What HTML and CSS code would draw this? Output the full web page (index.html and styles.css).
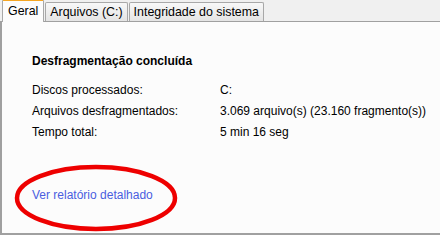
FILE: index.html
```html
<!DOCTYPE html>
<html>
<head>
<meta charset="utf-8">
<link rel="stylesheet" href="styles.css">
</head>
<body>
<div class="window">
  <div class="tabs">
    <div class="tab active">Geral</div>
    <div class="tab">Arquivos (C:)</div>
    <div class="tab">Integridade do sistema</div>
  </div>
  <div class="panel">
    <div class="title">Desfragmentação concluída</div>
    <div class="rows">
      <div class="label">Discos processados:</div><div class="value">C:</div>
      <div class="label">Arquivos desfragmentados:</div><div class="value">3.069 arquivo(s) (23.160 fragmento(s))</div>
      <div class="label">Tempo total:</div><div class="value">5 min 16 seg</div>
    </div>
    <div class="linkwrap">
      <a class="link">Ver relatório detalhado</a>
      <svg class="circle" width="166" height="70" viewBox="0 0 166 70">
        <ellipse cx="83" cy="35" rx="79" ry="31" fill="none" stroke="#ee0000" stroke-width="4.5"/>
      </svg>
    </div>
  </div>
</div>
</body>
</html>
```
FILE: styles.css
```css
html, body { margin: 0; padding: 0; }
body {
  width: 440px; height: 237px; overflow: hidden;
  background: #ffffff;
  font-family: "Liberation Sans", Arial, sans-serif;
  font-size: 12px;
  color: #000;
}
.window { width: 440px; height: 235px; display: flex; flex-direction: column; }
.tabs {
  height: 22px;
  background: #f0f0f0;
  display: flex;
  align-items: flex-end;
  padding-left: 2px;
  gap: 1px;
  border-bottom: 1px solid #a0a0a0;
  box-sizing: border-box;
}
.tab {
  height: 19px;
  box-sizing: border-box;
  padding: 0 4px;
  font-size: 12.4px;
  line-height: 18px;
  color: #000;
  border: 1px solid #a8a8a8;
  border-bottom: none;
  background: linear-gradient(#f8f8f8, #e4e4e4);
  border-radius: 2px 2px 0 0;
}
.tab.active {
  height: 23px;
  margin-bottom: -1px;
  background: #fcfcfc;
  border-top: 2px solid #f5a623;
  padding: 0 5px 0 5px;
  line-height: 20px;
}
.panel {
  flex: 1;
  background: #fcfcfc;
  border-left: 2px solid #a0a0a0;
  border-bottom: 2px solid #a0a0a0;
  padding: 32px 0 0 30px;
}
.title { font-weight: bold; font-size: 12px; line-height: 14px; }
.rows {
  margin-top: 12px;
  display: grid;
  grid-template-columns: 188px auto;
  line-height: 21px;
}
.linkwrap { position: relative; margin-top: 45px; height: 14px; }
.link { color: #4a5ee0; line-height: 14px; font-size: 12px; }
.circle { position: absolute; left: -19px; top: -25px; }
```
